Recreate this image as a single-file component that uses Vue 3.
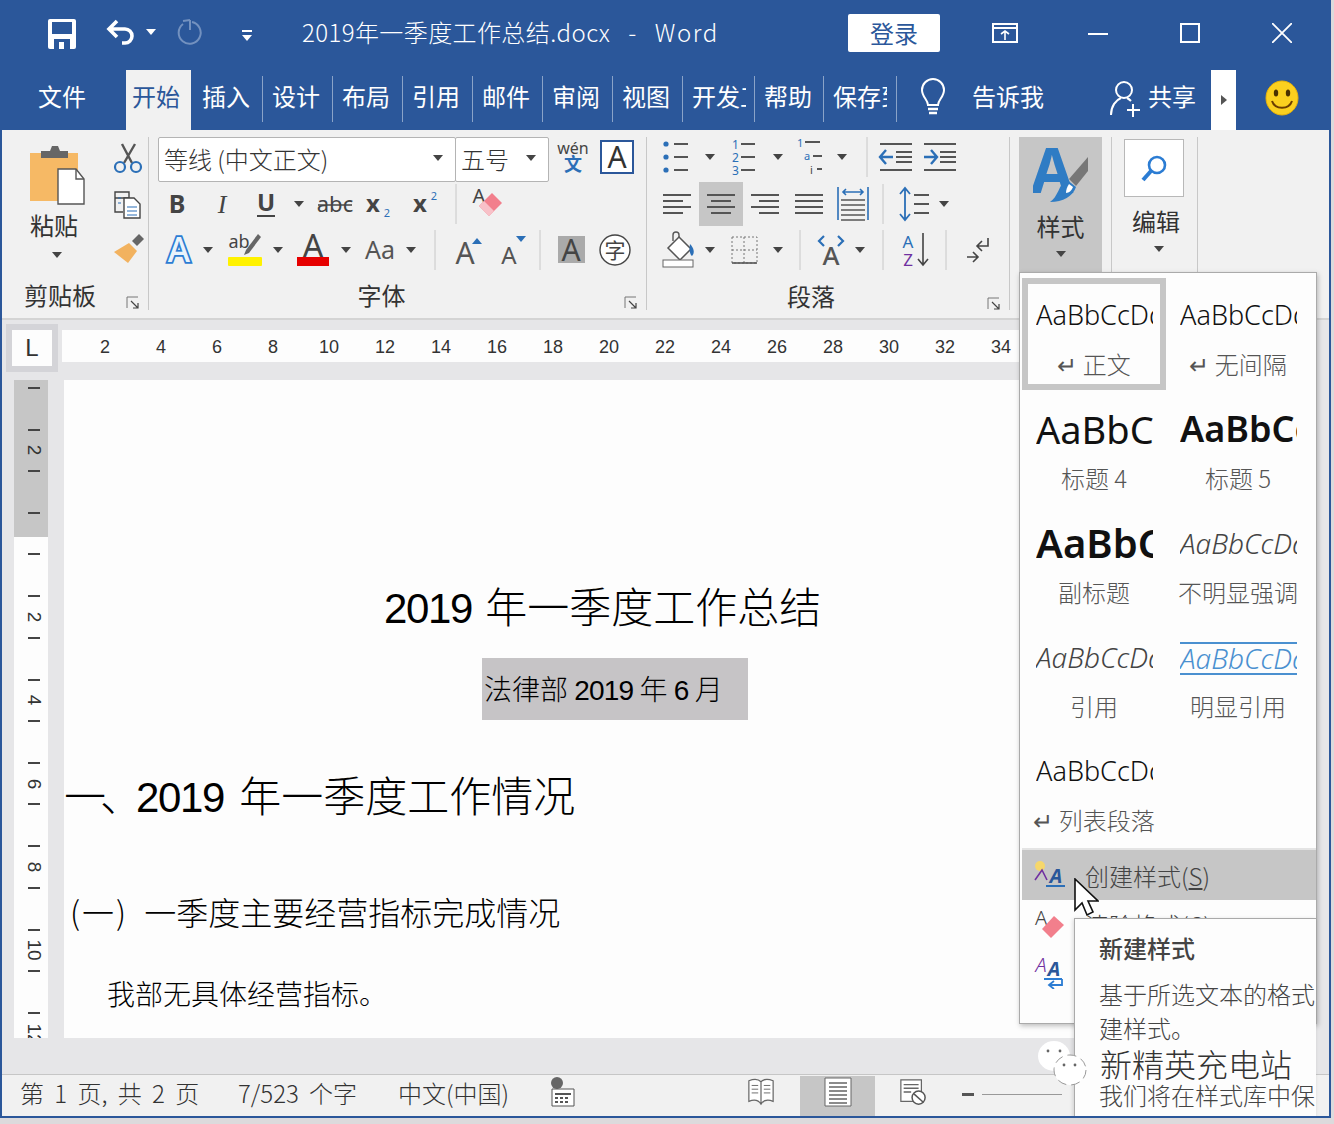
<script setup>
const tabs = [
  { name: '插入', w: 70 },
  { name: '设计', w: 70 },
  { name: '布局', w: 70 },
  { name: '引用', w: 70 },
  { name: '邮件', w: 70 },
  { name: '审阅', w: 70 },
  { name: '视图', w: 70 },
  { name: '开发工具', w: 72 },
  { name: '帮助', w: 69 },
  { name: '保存到', w: 73 },
];

const hTicks = [2, 4, 6, 8, 10, 12, 14, 16, 18, 20, 22, 24, 26, 28, 30, 32, 34];
const vTicks = ['', 2, '', 2, 4, 6, 8, 10, 12];

const styles = [
  { sample: 'AaBbCcDd', label: '↵ 正文', cls: 'normal', on: true },
  { sample: 'AaBbCcDd', label: '↵ 无间隔', cls: 'normal' },
  { sample: 'AaBbCcDd', label: '标题 4', cls: 'h4' },
  { sample: 'AaBbCcDd', label: '标题 5', cls: 'h5' },
  { sample: 'AaBbCcDd', label: '副标题', cls: 'sub' },
  { sample: 'AaBbCcDd', label: '不明显强调', cls: 'em' },
  { sample: 'AaBbCcDd', label: '引用', cls: 'em' },
  { sample: 'AaBbCcDd', label: '明显引用', cls: 'em quote' },
  { sample: 'AaBbCcDd', label: '↵ 列表段落', cls: 'normal' },
];
</script>

<template>
  <div class="win">
    <svg class="defs" width="0" height="0">
      <defs>
        <symbol id="caret" overflow="visible"><path d="M15 17h10l-5 6z" fill="#444" /></symbol>
        <symbol id="sep" overflow="visible"><path d="M20 0v40" stroke="#c8c8c8" stroke-width="1" /></symbol>
      </defs>
    </svg>

    <header class="titlebar">
      <svg class="qa save" viewBox="0 0 28 30">
        <path fill="#fff" d="M0 2a2 2 0 0 1 2-2h24a2 2 0 0 1 2 2v26a2 2 0 0 1-2 2H2a2 2 0 0 1-2-2z" />
        <rect x="4" y="3" width="20" height="12" fill="#2b579a" />
        <rect x="6" y="20" width="16" height="10" fill="#2b579a" />
        <rect x="11" y="23" width="5" height="7" fill="#fff" />
      </svg>
      <svg class="qa undo" viewBox="0 0 30 30">
        <path d="M11 3 3 11l8 8M4 11h15a7 7 0 0 1 0 14h-3" fill="none" stroke="#fff" stroke-width="3.6" />
      </svg>
      <svg class="qa qcaret" viewBox="0 0 12 8"><path d="M1 1h10L6 7z" fill="#fff" /></svg>
      <svg class="qa redo" viewBox="0 0 28 30">
        <path d="M16 3a11 11 0 1 1-9 2" fill="none" stroke="#7391bf" stroke-width="2" />
        <path d="M14 1v10M14 1l-7 1" fill="none" stroke="#7391bf" stroke-width="2" />
      </svg>
      <svg class="qa more" viewBox="0 0 12 12"><path d="M1 1h10v2H1zM1 6h10L6 12z" fill="#fff" /></svg>
      <div class="doc-name">2019年一季度工作总结.docx<span class="dash-gap">-</span><span class="word">Word</span></div>
      <button class="signin" type="button">登录</button>
      <svg class="win-ic display" viewBox="0 0 26 20">
        <path d="M1 1h24v18H1z" fill="none" stroke="#fff" stroke-width="2" />
        <path d="M1 5h24" stroke="#fff" stroke-width="2" />
        <path d="M13 8v9M9 11l4-3 4 3" fill="none" stroke="#fff" stroke-width="1.6" />
      </svg>
      <svg class="win-ic min" viewBox="0 0 20 20"><path d="M0 11h20" stroke="#fff" stroke-width="2" /></svg>
      <svg class="win-ic max" viewBox="0 0 20 20"><path d="M1 1h18v18H1z" fill="none" stroke="#fff" stroke-width="2" /></svg>
      <svg class="win-ic close" viewBox="0 0 20 20"><path d="M0 0l20 20M20 0 0 20" stroke="#fff" stroke-width="1.8" /></svg>
    </header>

    <nav class="tabs">
      <div class="tab tab-file">文件</div>
      <div class="tab tab-home">开始</div>
      <div v-for="t in tabs" :key="t.name" class="tab tab-sep" :style="{ width: t.w + 'px' }">
        <span class="tab-clip">{{ t.name }}</span>
      </div>
      <svg class="bulb" viewBox="0 0 30 40">
        <path d="M10 27c0-5-6-8-6-15a11 11 0 0 1 22 0c0 7-6 10-6 15z" fill="none" stroke="#fff" stroke-width="2" />
        <path d="M10 31h10M11 35h8" stroke="#fff" stroke-width="2.4" />
      </svg>
      <div class="tab tell">告诉我</div>
      <svg class="share" viewBox="0 0 32 40">
        <circle cx="14" cy="11" r="8" fill="none" stroke="#fff" stroke-width="2" />
        <path d="M1 36c0-9 5-15 10-17M17 19c2 1 3 2 4 3" fill="none" stroke="#fff" stroke-width="2" />
        <path d="M23 25v13M17 31h13" stroke="#fff" stroke-width="2" />
      </svg>
      <div class="tab share-text">共享</div>
      <div class="scroll-right"><svg width="8" height="10" viewBox="0 0 8 10"><path d="M1 0l6 5-6 5z" fill="#555" /></svg></div>
      <svg class="smile" viewBox="0 0 34 36">
        <ellipse cx="17" cy="18" rx="16" ry="17" fill="#fbd01f" stroke="#eab308" />
        <ellipse cx="11" cy="13" rx="2.2" ry="3.6" fill="#4a3000" />
        <ellipse cx="23" cy="13" rx="2.2" ry="3.6" fill="#4a3000" />
        <path d="M7 21c3 9 17 9 20 0" fill="none" stroke="#6b3d00" stroke-width="2" />
      </svg>
    </nav>

    <section class="ribbon">
      <div class="group clip-group">
        <div class="clip-body">
          <div class="paste">
            <svg class="paste-ic" viewBox="0 0 60 60">
              <rect x="2" y="8" width="48" height="48" fill="#f6b965" />
              <path d="M13 6h9l2-5h6l2 5h8v7H13z" fill="#666" />
              <path d="M30 24h18l8 10v25H30z" fill="#fff" stroke="#555" stroke-width="1.4" />
              <path d="M48 24v10h8" fill="none" stroke="#555" stroke-width="1.4" />
            </svg>
            <div class="big-label">粘贴</div>
            <svg class="t mini"><use href="#caret" /></svg>
          </div>
          <div class="clip-tools">
            <svg class="t">
              <path d="M14 6l10 19M27 6 16 25" stroke="#555" stroke-width="2.4" />
              <circle cx="12" cy="29" r="5" fill="none" stroke="#2b6fb7" stroke-width="2.2" />
              <circle cx="28" cy="29" r="5" fill="none" stroke="#2b6fb7" stroke-width="2.2" />
            </svg>
            <svg class="t">
              <path d="M7 8h14v6H7zM7 8v20h8" fill="none" stroke="#444" stroke-width="1.4" />
              <path d="M16 14h10l6 6v14H16z" fill="#fff" stroke="#444" stroke-width="1.4" />
              <path d="M19 23h10M19 27h10M19 31h10M10 14h3M10 19h3" stroke="#2b6fb7" stroke-width="1.2" />
            </svg>
            <svg class="t">
              <path d="M24 11l7-7 5 5-7 7z" fill="#666" />
              <path d="M21 13l8 8-9 12L6 22z" fill="#f2b25f" />
            </svg>
          </div>
        </div>
        <div class="foot clip-foot">剪贴板
          <svg class="launch" viewBox="0 0 14 14"><path d="M1 12V1h11" fill="none" stroke="#777" /><path d="M5 5l7 7M12 7v5H7" fill="none" stroke="#444" stroke-width="1.2" /></svg>
        </div>
      </div>

      <div class="group font-group">
        <div class="combo-row">
          <div class="combos">
            <div class="combo font-name">等线 (中文正文)<svg class="t combo-caret"><use href="#caret" /></svg></div>
            <div class="combo font-size">五号<svg class="t combo-caret"><use href="#caret" /></svg></div>
          </div>
          <div class="tool-row r0">
            <svg class="t">
              <text x="20" y="17" class="lbl" font-size="16" text-anchor="middle" fill="#444">wén</text>
              <text x="20" y="34" class="lbl" font-size="18" font-weight="700" text-anchor="middle" fill="#2b6fb7">文</text>
            </svg>
            <svg class="t">
              <rect x="4" y="4" width="32" height="32" fill="#fff" stroke="#2b579a" stroke-width="2" />
              <text x="20" y="31" class="lbl" font-size="30" text-anchor="middle" fill="#333">A</text>
            </svg>
          </div>
        </div>
        <div class="tool-row f2">
          <svg class="t"><text x="20" y="29" class="lbl" font-weight="700" font-size="25" text-anchor="middle" fill="#444">B</text></svg>
          <svg class="t"><text x="20" y="29" class="serif" font-style="italic" font-size="26" text-anchor="middle" fill="#444">I</text></svg>
          <svg class="t"><text x="20" y="27" class="lbl" font-weight="700" font-size="24" text-anchor="middle" fill="#444">U</text><path d="M11 32h18" stroke="#444" stroke-width="2" /></svg>
          <svg class="t"><use href="#caret" /></svg>
          <svg class="t"><text x="20" y="28" class="lbl" font-size="22" text-anchor="middle" fill="#444">abc</text><path d="M3 21h34" stroke="#444" stroke-width="1.6" /></svg>
          <svg class="t"><text x="16" y="28" class="lbl" font-weight="700" font-size="24" text-anchor="middle" fill="#444">x</text><text x="30" y="33" class="lbl" font-size="11" text-anchor="middle" fill="#2b6fb7">2</text></svg>
          <svg class="t"><text x="17" y="28" class="lbl" font-weight="700" font-size="24" text-anchor="middle" fill="#444">x</text><text x="31" y="16" class="lbl" font-size="11" text-anchor="middle" fill="#2b6fb7">2</text></svg>
          <svg class="t"><use href="#sep" /></svg>
          <svg class="t">
            <text x="13" y="19" class="lbl" font-size="20" text-anchor="middle" fill="#444">A</text>
            <path d="M26 9l10 10-13 13-10-10z" fill="#f27f8c" />
            <path d="M13 22l5-5 10 10-5 5z" fill="#f8c1c8" />
          </svg>
        </div>
        <div class="tool-row f3">
          <svg class="t"><text x="20" y="32" class="lbl" font-size="34" font-weight="500" text-anchor="middle" fill="#eaf3fb" stroke="#2b7cd3" stroke-width="3.6" paint-order="stroke">A</text></svg>
          <svg class="t"><use href="#caret" /></svg>
          <svg class="t">
            <text x="14" y="18" class="lbl" font-size="18" text-anchor="middle" fill="#444">ab</text>
            <path d="M21 20 33 4l3 3-12 16-5 2z" fill="#666" />
            <rect x="3" y="27" width="34" height="9" rx="1" fill="#fff200" />
          </svg>
          <svg class="t"><use href="#caret" /></svg>
          <svg class="t">
            <text x="20" y="28" class="lbl" font-size="33" text-anchor="middle" fill="#444">A</text>
            <rect x="4" y="27" width="32" height="9" fill="#e60000" />
          </svg>
          <svg class="t"><use href="#caret" /></svg>
          <svg class="t"><text x="20" y="29" class="lbl" font-size="25" text-anchor="middle" fill="#555">Aa</text></svg>
          <svg class="t"><use href="#caret" /></svg>
          <svg class="t"><use href="#sep" /></svg>
          <svg class="t">
            <text x="18" y="34" class="lbl" font-size="30" text-anchor="middle" fill="#555">A</text>
            <path d="M25 14l5-6 5 6z" fill="#2b6fb7" />
          </svg>
          <svg class="t">
            <text x="18" y="34" class="lbl" font-size="24" text-anchor="middle" fill="#555">A</text>
            <path d="M25 6h10l-5 6z" fill="#2b6fb7" />
          </svg>
          <svg class="t"><use href="#sep" /></svg>
          <svg class="t">
            <rect x="7" y="6" width="27" height="27" fill="#aaa" />
            <text x="20" y="31" class="lbl" font-size="30" text-anchor="middle" fill="#444">A</text>
          </svg>
          <svg class="t">
            <circle cx="20" cy="20" r="15" fill="#fff" stroke="#444" stroke-width="1.4" />
            <text x="20" y="28" class="lbl" font-size="21" text-anchor="middle" fill="#444">字</text>
          </svg>
        </div>
        <div class="foot font-foot">字体
          <svg class="launch" viewBox="0 0 14 14"><path d="M1 12V1h11" fill="none" stroke="#777" /><path d="M5 5l7 7M12 7v5H7" fill="none" stroke="#444" stroke-width="1.2" /></svg>
        </div>
      </div>

      <div class="group para-group">
        <div class="tool-row p1">
          <svg class="t">
            <path d="M17 7h14M17 20h14M17 33h14" stroke="#555" stroke-width="2" />
            <circle cx="9" cy="7" r="2.6" fill="#2b6fb7" /><circle cx="9" cy="20" r="2.6" fill="#2b6fb7" /><circle cx="9" cy="33" r="2.6" fill="#2b6fb7" />
          </svg>
          <svg class="t"><use href="#caret" /></svg>
          <svg class="t">
            <path d="M17 7h14M17 20h14M17 33h14" stroke="#555" stroke-width="2" />
            <text x="8" y="12" class="lbl" font-size="12" fill="#2b6fb7">1</text>
            <text x="8" y="25" class="lbl" font-size="12" fill="#2b6fb7">2</text>
            <text x="8" y="38" class="lbl" font-size="12" fill="#2b6fb7">3</text>
          </svg>
          <svg class="t"><use href="#caret" /></svg>
          <svg class="t">
            <path d="M11 5h15M19 19h9M23 32h5" stroke="#555" stroke-width="2" />
            <text x="3" y="10" class="lbl" font-size="11" fill="#2b6fb7">1</text>
            <text x="10" y="23" class="lbl" font-size="11" fill="#2b6fb7">a</text>
            <text x="16" y="37" class="lbl" font-size="11" fill="#444">i</text>
          </svg>
          <svg class="t"><use href="#caret" /></svg>
          <svg class="t"><use href="#sep" /></svg>
          <svg class="t">
            <path d="M3 7h32M3 33h32M19 15h16M19 20h16M19 25h16" stroke="#555" stroke-width="1.8" />
            <path d="M3 20h13M9 13l-6 7 6 7" fill="none" stroke="#2b6fb7" stroke-width="2.4" />
          </svg>
          <svg class="t">
            <path d="M3 7h32M3 33h32M19 15h16M19 20h16M19 25h16" stroke="#555" stroke-width="1.8" />
            <path d="M3 20h13M10 13l6 7-6 7" fill="none" stroke="#2b6fb7" stroke-width="2.4" />
          </svg>
        </div>
        <div class="tool-row p2">
          <svg class="t"><path d="M6 11h28M6 17h20M6 23h28M6 29h20" stroke="#555" stroke-width="1.8" /></svg>
          <svg class="t">
            <rect x="-2" y="-2" width="44" height="44" fill="#c6c6c6" />
            <path d="M6 11h28M10 17h20M6 23h28M10 29h20" stroke="#555" stroke-width="1.8" />
          </svg>
          <svg class="t"><path d="M6 11h28M14 17h20M6 23h28M14 29h20" stroke="#555" stroke-width="1.8" /></svg>
          <svg class="t"><path d="M6 11h28M6 17h28M6 23h28M6 29h28" stroke="#555" stroke-width="1.8" /></svg>
          <svg class="t">
            <path d="M5 3v33M35 3v33" stroke="#2b6fb7" stroke-width="1.6" />
            <path d="M10 8h20M13 5l-3 3 3 3M27 5l3 3-3 3" fill="none" stroke="#2b6fb7" stroke-width="1.6" />
            <path d="M8 16h24M8 21h24M8 26h24M8 31h24M8 36h24" stroke="#555" stroke-width="1.5" />
          </svg>
          <svg class="t"><use href="#sep" /></svg>
          <svg class="t">
            <path d="M10 5v30M5 10l5-6 5 6M5 30l5 6 5-6" fill="none" stroke="#2b6fb7" stroke-width="1.8" />
            <path d="M19 11h15M19 20h15M19 29h15" stroke="#555" stroke-width="1.8" />
          </svg>
          <svg class="t"><use href="#caret" /></svg>
        </div>
        <div class="tool-row p3">
          <svg class="t">
            <path d="M14 11V5a3 3 0 0 1 6 0v6" fill="none" stroke="#555" stroke-width="1.4" />
            <path d="M20 7l12 12-11 11L9 18z" fill="#fff" stroke="#555" stroke-width="1.5" />
            <path d="M31 14c4 4 5 9 2 12-2-1-3-6-2-12z" fill="#2b6fb7" />
            <rect x="4" y="30" width="30" height="7" fill="#fff" stroke="#666" />
          </svg>
          <svg class="t"><use href="#caret" /></svg>
          <svg class="t">
            <path d="M8 7h25v26H8zM20 7v26M8 20h25" fill="none" stroke="#777" stroke-dasharray="2 2" />
            <path d="M8 33h25" stroke="#555" stroke-width="1.6" />
          </svg>
          <svg class="t"><use href="#caret" /></svg>
          <svg class="t"><use href="#sep" /></svg>
          <svg class="t">
            <text x="20" y="35" class="lbl" font-size="26" font-weight="500" text-anchor="middle" fill="#555">A</text>
            <path d="M13 6l-5 5 5 5M27 6l5 5-5 5" fill="none" stroke="#2b6fb7" stroke-width="2.2" />
          </svg>
          <svg class="t"><use href="#caret" /></svg>
          <svg class="t"><use href="#sep" /></svg>
          <svg class="t">
            <text x="12" y="18" class="lbl" font-size="17" text-anchor="middle" fill="#2b6fb7">A</text>
            <text x="12" y="36" class="lbl" font-size="17" text-anchor="middle" fill="#7030a0">Z</text>
            <path d="M27 3v32M22 29l5 6 5-6" fill="none" stroke="#444" stroke-width="1.6" />
          </svg>
          <svg class="t"><use href="#sep" /></svg>
          <svg class="t">
            <path d="M30 8v8H20M24 11l-5 5 5 5" fill="none" stroke="#444" stroke-width="1.6" />
            <path d="M9 27h11M15 22l5 5-5 5" fill="none" stroke="#444" stroke-width="1.6" />
          </svg>
        </div>
        <div class="foot para-foot">段落
          <svg class="launch" viewBox="0 0 14 14"><path d="M1 12V1h11" fill="none" stroke="#777" /><path d="M5 5l7 7M12 7v5H7" fill="none" stroke="#444" stroke-width="1.2" /></svg>
        </div>
      </div>

      <div class="style-btn">
        <svg class="style-ic" viewBox="0 0 56 62">
          <text x="19" y="50" class="lbl" font-size="62" font-weight="700" text-anchor="middle" fill="#2f7cc4">A</text>
          <path d="M36 36 55 14v14L43 43z" fill="#777" />
          <path d="M33 36l10 8c-3 9-13 15-26 15 8-5 9-17 16-23z" fill="#2f7cc4" />
          <path d="M36 41l4 3c-1 3-4 6-7 6 0-3 1-6 3-9z" fill="#fff" />
        </svg>
        <div class="big-label">样式</div>
        <svg class="t mini"><use href="#caret" /></svg>
      </div>

      <div class="edit-group">
        <div class="edit-box">
          <svg width="30" height="30" viewBox="0 0 30 30">
            <circle cx="18" cy="12" r="8" fill="none" stroke="#2b7cd3" stroke-width="2.6" />
            <path d="M12 18 4 27" stroke="#2b7cd3" stroke-width="4" />
          </svg>
        </div>
        <div class="big-label edit-label">编辑</div>
        <svg class="t mini"><use href="#caret" /></svg>
      </div>
    </section>

    <div class="h-ruler-row">
      <div class="corner"><span>L</span></div>
      <div class="h-ruler">
        <span v-for="n in hTicks" :key="n" class="h-tick">{{ n }}</span>
      </div>
    </div>

    <main class="workspace">
      <div class="v-ruler">
        <div class="v-ruler-in">
          <div v-for="(n, i) in vTicks" :key="i" class="v-cell">
            <i class="dash"></i>
            <span class="v-num">{{ n }}</span>
            <i class="dash"></i>
          </div>
        </div>
      </div>
      <article class="page">
        <h1 class="doc-title"><span class="num">2019</span> 年一季度工作总结</h1>
        <p class="doc-sub"><span class="sel">法律部 <span class="num">2019</span> 年 <span class="num">6</span> 月</span></p>
        <h2 class="doc-h1"><span class="lead">一、</span><span class="num">2019</span> 年一季度工作情况</h2>
        <h3 class="doc-h2"><span class="par">(一)</span> 一季度主要经营指标完成情况</h3>
        <p class="doc-body">我部无具体经营指标。</p>
      </article>
    </main>

    <footer class="status">
      <span class="st-text">第 1 页, 共 2 页</span>
      <span class="st-text">7/523 个字</span>
      <span class="st-text">中文(中国)</span>
      <svg class="st-ic" viewBox="0 0 26 30">
        <circle cx="8" cy="6" r="6" fill="#666" />
        <path d="M3 12h22v17H3z" fill="#fff" stroke="#555" />
        <path d="M6 16h16v2H6zM6 20h3v2H6zM11 20h3v2h-3zM16 20h3v2h-3zM6 24h3v2H6zM11 24h3v2h-3zM16 24h3v2h-3z" fill="#555" />
      </svg>
      <svg class="st-ic book" viewBox="0 0 30 30">
        <path d="M2 3c5-2 10-2 13 1 3-3 8-3 13-1v22c-5-2-10-2-13 3-3-5-8-5-13-3zM15 4v24" fill="#fff" stroke="#666" stroke-width="1.3" />
        <path d="M5 8h7M5 12h7M5 16h7M18 8h7M18 12h7M18 16h7" stroke="#666" />
      </svg>
      <span class="st-active">
        <svg class="st-ic" viewBox="0 0 28 30">
          <path d="M1 1h26v28H1z" fill="#fff" stroke="#666" />
          <path d="M5 6h18M5 10h18M5 14h18M5 18h18M5 22h18M5 26h18" stroke="#666" stroke-width="1.4" />
        </svg>
      </span>
      <span class="st-web">
        <svg class="st-ic" viewBox="0 0 30 30">
          <path d="M2 2h22v23H2z" fill="#fff" stroke="#666" stroke-width="1.3" />
          <path d="M5 7h16M5 11h16M5 15h8" stroke="#666" stroke-width="1.4" />
          <circle cx="21" cy="21" r="7" fill="#fff" stroke="#555" stroke-width="1.6" />
          <path d="M16 17l10 9" stroke="#555" stroke-width="1.6" />
        </svg>
      </span>
      <span class="zoom-minus"></span>
      <span class="zoom-line"></span>
    </footer>

    <!-- 样式库下拉面板 -->
    <aside class="gallery">
      <div class="gallery-grid">
        <div v-for="s in styles" :key="s.label" class="style-item" :class="{ on: s.on }">
          <div class="sample" :class="s.cls">{{ s.sample }}</div>
          <div class="style-label">{{ s.label }}</div>
        </div>
      </div>
      <div class="menu-line"></div>
      <div class="menu-row hot">
        <svg class="menu-ic" viewBox="0 0 34 30">
          <circle cx="8" cy="6" r="5" fill="#f6d76b" />
          <path d="M3 20 10 10l5 10" fill="none" stroke="#7030a0" stroke-width="1.6" />
          <text x="24" y="23" class="lbl" font-style="italic" font-weight="700" font-size="20" text-anchor="middle" fill="#2b579a">A</text>
          <path d="M14 26h19" stroke="#2b6fb7" stroke-width="2" />
        </svg>
        <span>创建样式(<u>S</u>)</span>
      </div>
      <div class="menu-row">
        <svg class="menu-ic" viewBox="0 0 34 30">
          <text x="9" y="16" class="lbl" font-size="20" text-anchor="middle" fill="#444">A</text>
          <path d="M22 7l10 9-13 13-9-9z" fill="#f27f8c" />
        </svg>
        <span>清除格式(C)</span>
      </div>
      <div class="menu-row">
        <svg class="menu-ic" viewBox="0 0 34 34">
          <text x="9" y="17" class="lbl" font-style="italic" font-size="20" text-anchor="middle" fill="#7030a0">A</text>
          <text x="22" y="21" class="lbl" font-style="italic" font-weight="700" font-size="20" text-anchor="middle" fill="#2b579a">A</text>
          <path d="M12 24h18M30 24v6H18M22 26l-5 4 5 4" fill="none" stroke="#2b7cd3" stroke-width="1.8" />
        </svg>
        <span></span>
      </div>
    </aside>

    <aside class="tip">
      <div class="tip-title">新建样式</div>
      <div class="tip-line first">基于所选文本的格式</div>
      <div class="tip-line">建样式。</div>
      <div class="tip-line last">我们将在样式库中保</div>
    </aside>

    <svg class="cursor" viewBox="0 0 26 40">
      <path d="M2 1v31l7-7 5 12 6-3-5-11h10z" fill="#fff" stroke="#111" stroke-width="1.6" />
    </svg>

    <!-- 水印 -->
    <svg class="wechat" viewBox="0 0 50 48">
      <ellipse cx="17" cy="16" rx="16" ry="15" fill="#fff" />
      <ellipse cx="33" cy="30" rx="16" ry="15" fill="#fff" stroke="#999" stroke-width="1" stroke-dasharray="9 5" />
      <circle cx="11" cy="11" r="1.4" fill="#666" /><circle cx="23" cy="11" r="1.4" fill="#666" />
      <circle cx="27" cy="25" r="1.4" fill="#666" /><circle cx="38" cy="25" r="1.4" fill="#666" />
    </svg>
    <div class="watermark">新精英充电站</div>
  </div>
</template>

<style scoped>
.win {
  position: relative;
  box-sizing: border-box;
  width: 1331px;
  height: 1118px;
  display: flex;
  flex-direction: column;
  overflow: hidden;
  border: 2px solid #2b579a;
  border-top: 0;
  background: #e6e6e8;
  font-family: 'Noto Sans CJK SC', 'Noto Sans', sans-serif;
  font-weight: 400;
  color: #333;
}

.defs {
  position: absolute;
}

.lbl {
  font-family: 'Noto Sans', 'Noto Sans CJK SC', sans-serif;
}

.serif {
  font-family: 'Liberation Serif', serif;
}

/* title bar */
.titlebar {
  flex: none;
  height: 62px;
  display: flex;
  align-items: center;
  background: #2b579a;
  color: #fff;
}

.qa {
  flex: none;
}

.save {
  width: 28px;
  height: 30px;
  margin: 6px 0 0 46px;
}

.undo {
  width: 30px;
  height: 30px;
  margin: 4px 0 0 30px;
}

.qcaret {
  width: 12px;
  height: 8px;
  margin: 2px 0 0 9px;
}

.redo {
  width: 28px;
  height: 30px;
  margin: 6px 0 0 19px;
}

.more {
  width: 12px;
  height: 12px;
  margin: 8px 0 0 37px;
}

.doc-name {
  width: 546px;
  margin-left: 49px;
  font-size: 24px;
  font-weight: 300;
  white-space: nowrap;
  letter-spacing: 0.4px;
}

.dash-gap {
  margin: 0 18px;
}

.word {
  letter-spacing: 1.6px;
}

.signin {
  flex: none;
  width: 92px;
  height: 38px;
  margin: 3px 0 0 0;
  padding: 0;
  border: 0;
  border-radius: 2px;
  background: #fff;
  color: #2b579a;
  font-family: inherit;
  font-weight: 400;
  font-size: 24px;
  line-height: 38px;
}

.win-ic {
  flex: none;
  height: 20px;
  margin-top: 3px;
}

.display {
  width: 26px;
  margin-left: 52px;
}

.min {
  width: 20px;
  margin-left: 70px;
}

.max {
  width: 20px;
  margin-left: 72px;
}

.close {
  width: 20px;
  margin-left: 72px;
}

/* tabs */
.tabs {
  flex: none;
  height: 68px;
  display: flex;
  align-items: flex-end;
  background: #2b579a;
  color: #fff;
}

.tab {
  flex: none;
  box-sizing: border-box;
  height: 46px;
  margin-bottom: 8px;
  font-size: 24px;
  line-height: 40px;
  white-space: nowrap;
}

.tab-file {
  width: 124px;
  padding-left: 36px;
}

.tab-home {
  width: 65px;
  height: 60px;
  margin: 0 2px 0 0;
  padding-left: 6px;
  background: #f1f1f1;
  color: #2b579a;
  line-height: 52px;
}

.tab-sep {
  padding-left: 9px;
  border-right: 1px solid #8aa3c8;
}

.tab-clip {
  display: block;
  width: 54px;
  overflow: hidden;
}

.bulb {
  flex: none;
  width: 30px;
  height: 40px;
  margin: 0 0 12px 21px;
}

.tell {
  margin-left: 24px;
}

.share {
  flex: none;
  width: 32px;
  height: 40px;
  margin: 0 0 11px 66px;
}

.share-text {
  margin-left: 6px;
}

.scroll-right {
  flex: none;
  width: 25px;
  height: 60px;
  margin-left: 15px;
  display: flex;
  align-items: center;
  justify-content: center;
  background: #fff;
}

.smile {
  flex: none;
  width: 34px;
  height: 36px;
  margin: 0 0 14px 29px;
}

/* ribbon */
.ribbon {
  flex: none;
  box-sizing: border-box;
  height: 190px;
  display: flex;
  background: #f1f1f1;
  border-bottom: 2px solid #d4d4d4;
}

.t {
  flex: none;
  display: block;
  width: 40px;
  height: 40px;
  overflow: visible;
}

.group {
  flex: none;
  box-sizing: border-box;
  height: 173px;
  margin-top: 7px;
  display: flex;
  flex-direction: column;
  border-right: 1px solid #c8c8c8;
}

.clip-group {
  width: 147px;
}

.font-group {
  width: 498px;
}

.para-group {
  width: 363px;
}

.clip-body {
  height: 136px;
  display: flex;
}

.paste {
  width: 96px;
  padding-left: 26px;
  display: flex;
  flex-direction: column;
  align-items: flex-start;
}

.paste-ic {
  display: block;
  width: 60px;
  height: 60px;
  margin-top: 8px;
}

.big-label {
  width: 56px;
  height: 36px;
  margin-top: 3px;
  font-size: 24px;
  line-height: 36px;
  text-align: center;
}

.mini {
  width: 40px;
  height: 24px;
  margin-top: -10px;
}

.paste .big-label {
  width: 52px;
  margin-top: 2px;
}

.paste .mini {
  margin: -8px 0 0 9px;
}

.clip-tools {
  display: flex;
  flex-direction: column;
  gap: 6px;
  margin-left: -14px;
  padding-top: 1px;
}

.foot {
  position: relative;
  height: 30px;
  margin-top: 7px;
  font-size: 24px;
  line-height: 30px;
  text-align: center;
}

.clip-foot {
  padding-right: 30px;
}

.font-foot {
  padding-right: 32px;
  margin-top: 10px;
}

.para-foot {
  padding-right: 34px;
  margin-top: 11px;
}

.launch {
  position: absolute;
  right: 8px;
  bottom: 0;
  width: 14px;
  height: 14px;
}

.combo-row {
  height: 45px;
  display: flex;
  align-items: flex-start;
}

.combos {
  flex: none;
  display: flex;
  margin-left: 9px;
  height: 45px;
}

.combo {
  position: relative;
  box-sizing: border-box;
  height: 45px;
  padding-left: 5px;
  background: #fff;
  border: 1px solid #b4b4b4;
  border-radius: 2px;
  font-size: 24px;
  line-height: 42px;
  font-weight: 300;
  white-space: nowrap;
}

.font-name {
  width: 298px;
}

.font-size {
  width: 94px;
  margin-left: -1px;
}

.combo-caret {
  position: absolute;
  top: 0;
  right: -3px;
}

.tool-row {
  display: grid;
  height: 40px;
  justify-items: start;
}

.r0 {
  grid-template-columns: 44px 40px;
  margin-left: 4px;
}

.f2 {
  margin: 2px 0 0 8px;
  grid-template-columns: 45px 44px 33px 36px 42px 46px 33px 30px 40px;
}

.f3 {
  margin: 6px 0 0 10px;
  grid-template-columns: 29px 37px 33px 35px 33px 34px 31px 24px 32px 44px 29px 31px 44px 40px;
}

.p1 {
  margin-left: 10px;
  grid-template-columns: 33px 34px 34px 36px 28px 25px 30px 44px 40px;
}

.p2 {
  margin: 7px 0 0 10px;
  grid-template-columns: 44px 44px 44px 44px 30px 32px 29px 40px;
}

.p3 {
  margin: 6px 0 0 12px;
  grid-template-columns: 31px 34px 34px 22px 31px 29px 23px 33px 30px 32px 40px;
}

.style-btn {
  flex: none;
  width: 83px;
  height: 135px;
  margin: 7px 0 0 9px;
  display: flex;
  flex-direction: column;
  align-items: center;
  background: #c6c6c6;
}

.style-ic {
  width: 56px;
  height: 62px;
  margin-top: 6px;
}

.edit-group {
  flex: none;
  box-sizing: border-box;
  width: 87px;
  height: 135px;
  margin: 7px 0 0 9px;
  display: flex;
  flex-direction: column;
  align-items: center;
  border-left: 1px solid #c8c8c8;
  border-right: 1px solid #c8c8c8;
}

.edit-box {
  flex: none;
  box-sizing: border-box;
  width: 60px;
  height: 58px;
  margin: 2px 0 0 -1px;
  display: flex;
  align-items: center;
  justify-content: center;
  background: #fff;
  border: 1px solid #b8b8b8;
}

.edit-label {
  margin: 6px 0 0 3px;
}

.edit-group .mini {
  margin-left: 9px;
}

/* rulers */
.h-ruler-row {
  flex: none;
  height: 60px;
  display: flex;
  align-items: flex-start;
}

.corner {
  flex: none;
  box-sizing: border-box;
  width: 40px;
  height: 36px;
  margin: 10px 0 0 10px;
  background: #fdfdfd;
  outline: 6px solid #d4d4d8;
  display: flex;
  align-items: center;
  justify-content: center;
  font-family: 'Liberation Sans', sans-serif;
  font-size: 24px;
  font-weight: 400;
}

.h-ruler {
  flex: none;
  box-sizing: border-box;
  width: 1000px;
  height: 32px;
  margin: 10px 0 0 10px;
  padding-left: 15px;
  display: flex;
  background: #fdfdfd;
}

.h-tick {
  flex: none;
  width: 56px;
  font-family: 'Liberation Sans', sans-serif;
  font-size: 18px;
  line-height: 34px;
  text-align: center;
}

.workspace {
  flex: none;
  height: 658px;
  display: flex;
  overflow: hidden;
}

.v-ruler {
  flex: none;
  box-sizing: border-box;
  width: 34px;
  margin-left: 12px;
  padding-left: 6px;
  overflow: hidden;
  background: linear-gradient(#c6c6c6 157px, #fdfdfd 157px);
}

.v-ruler-in {
  margin-top: -54.5px;
}

.v-cell {
  box-sizing: border-box;
  height: 83.3px;
  padding: 20px 0;
  display: flex;
  flex-direction: column;
  align-items: center;
  justify-content: space-between;
}

.dash {
  display: block;
  width: 12px;
  height: 2px;
  background: #444;
}

.v-num {
  height: 0;
  line-height: 0;
  transform: rotate(90deg);
  font-family: 'Liberation Sans', sans-serif;
  font-size: 19px;
}

.page {
  flex: none;
  width: 1080px;
  margin-left: 16px;
  background: #fdfdfd;
  color: #000;
  font-weight: 300;
}

.doc-title,
.doc-h1,
.doc-h2 {
  margin: 0;
  font-weight: 300;
  white-space: nowrap;
}

.doc-title {
  margin: 195px 0 0 320px;
  font-size: 42px;
  line-height: 60px;
}

.num {
  font-family: 'Liberation Sans', sans-serif;
  font-weight: 400;
  letter-spacing: -1.4px;
  margin-right: 3px;
}

.doc-title .num {
  margin-right: 4px;
}

.doc-sub {
  margin: 19px 0 0 418px;
  height: 62px;
  font-size: 28px;
}

.sel {
  box-sizing: border-box;
  display: block;
  width: 266px;
  height: 62px;
  padding-left: 2px;
  background: #c6c4c6;
  line-height: 60px;
  white-space: nowrap;
}

.sel .num {
  letter-spacing: -0.8px;
  margin-right: 0;
}

.doc-h1 {
  margin-top: 44px;
  font-size: 42px;
  line-height: 60px;
}

.doc-h1 .num {
  margin-right: 6px;
}

.lead {
  letter-spacing: -6px;
  margin-right: 0;
}

.doc-h2 {
  margin: 58px 0 0 6px;
  font-size: 32px;
  line-height: 50px;
}

.par {
  letter-spacing: 2px;
  margin-right: 9px;
}

.doc-body {
  margin: 37px 0 0 43px;
  font-size: 28px;
  line-height: 40px;
}

/* status bar */
.status {
  flex: none;
  box-sizing: border-box;
  height: 42px;
  margin-top: 36px;
  border-top: 1px solid #c6c6c6;
  display: grid;
  grid-template-columns: 218px 160px 150px 193px 59px 75px 75px 20px 92px;
  align-items: center;
  padding-left: 18px;
  background: #f1f1f1;
  font-size: 24px;
  font-weight: 300;
  white-space: nowrap;
}

.st-text {
  margin-bottom: 7px;
  word-spacing: 5px;
}

.st-ic {
  display: block;
  width: 28px;
  height: 30px;
  margin-bottom: 8px;
}

.book {
  margin-left: 6px;
}

.st-active,
.st-web {
  height: 41px;
  display: flex;
  align-items: center;
  justify-content: center;
}

.st-active {
  background: #c6c6c6;
}

.zoom-minus {
  width: 12px;
  height: 3px;
  margin: 0 0 4px 12px;
  background: #555;
}

.zoom-line {
  height: 1px;
  margin: 0 0 4px 12px;
  background: #999;
}

/* gallery */
.gallery {
  position: absolute;
  left: 1017px;
  top: 272px;
  box-sizing: border-box;
  width: 298px;
  height: 752px;
  padding: 5px 0 0 2px;
  background: #fdfdfd;
  border: 1px solid #aaa;
  box-shadow: 1px 2px 5px rgba(0, 0, 0, 0.25);
  font-weight: 300;
}

.gallery-grid {
  display: grid;
  grid-template-columns: 144px 144px;
  grid-auto-rows: 114px;
}

.style-item {
  box-sizing: border-box;
  padding: 0 8px;
  border: 6px solid transparent;
}

.style-item.on {
  border-color: #c6c6c6;
  height: 112px;
}

.sample {
  width: 117px;
  height: 56px;
  margin-top: 5px;
  overflow: hidden;
  white-space: nowrap;
  font-family: 'Noto Sans', sans-serif;
  color: #111;
  font-size: 27px;
  line-height: 52px;
  font-weight: 300;
}

.h4 {
  font-size: 38px;
  font-weight: 400;
}

.h5 {
  font-size: 36px;
  font-weight: 600;
}

.sub {
  font-size: 40px;
  font-weight: 600;
}

.em {
  font-style: italic;
  font-size: 28px;
  color: #444;
}

.quote {
  box-sizing: border-box;
  height: 33px;
  margin-top: 16px;
  margin-bottom: 12px;
  border-top: 2px solid #4a90d0;
  border-bottom: 2px solid #4a90d0;
  color: #4a90d0;
  line-height: 29px;
}

.style-label {
  margin: -1px -8px 0;
  font-size: 24px;
  line-height: 40px;
  text-align: center;
  color: #555;
  white-space: nowrap;
}

.menu-line {
  height: 2px;
  background: #e4e4e4;
}

.menu-row {
  height: 48px;
  display: flex;
  align-items: center;
  font-size: 24px;
  color: #444;
}

.menu-row.hot {
  height: 50px;
  background: #c6c6c6;
}

.menu-ic {
  flex: none;
  width: 34px;
  height: 34px;
  margin: 0 19px 0 10px;
}

/* tooltip */
.tip {
  position: absolute;
  left: 1072px;
  top: 918px;
  box-sizing: border-box;
  width: 242px;
  height: 200px;
  padding: 12px 0 0 24px;
  overflow: hidden;
  background: #fdfdfd;
  border: 1px solid #aaa;
  border-width: 1px 0 0 1px;
  box-shadow: -1px 1px 4px rgba(0, 0, 0, 0.15);
  font-size: 24px;
  font-weight: 300;
  color: #444;
}

.tip-title {
  height: 34px;
  line-height: 34px;
  font-weight: 500;
}

.tip-line {
  height: 34px;
  line-height: 34px;
  white-space: nowrap;
}

.tip-line.first {
  margin-top: 12px;
}

.tip-line.last {
  margin-top: 33px;
}

.cursor {
  position: absolute;
  left: 1071px;
  top: 878px;
  width: 26px;
  height: 40px;
}

.wechat {
  position: absolute;
  left: 1035px;
  top: 1040px;
  width: 50px;
  height: 48px;
}

.watermark {
  position: absolute;
  left: 1098px;
  top: 1043px;
  font-size: 32px;
  font-weight: 300;
  line-height: 40px;
  color: #333;
  text-shadow: 0 0 2px #fff, 0 0 3px #fff;
  white-space: nowrap;
}
</style>

<style>
html,
body {
  background: #dcdadc;
}
</style>
